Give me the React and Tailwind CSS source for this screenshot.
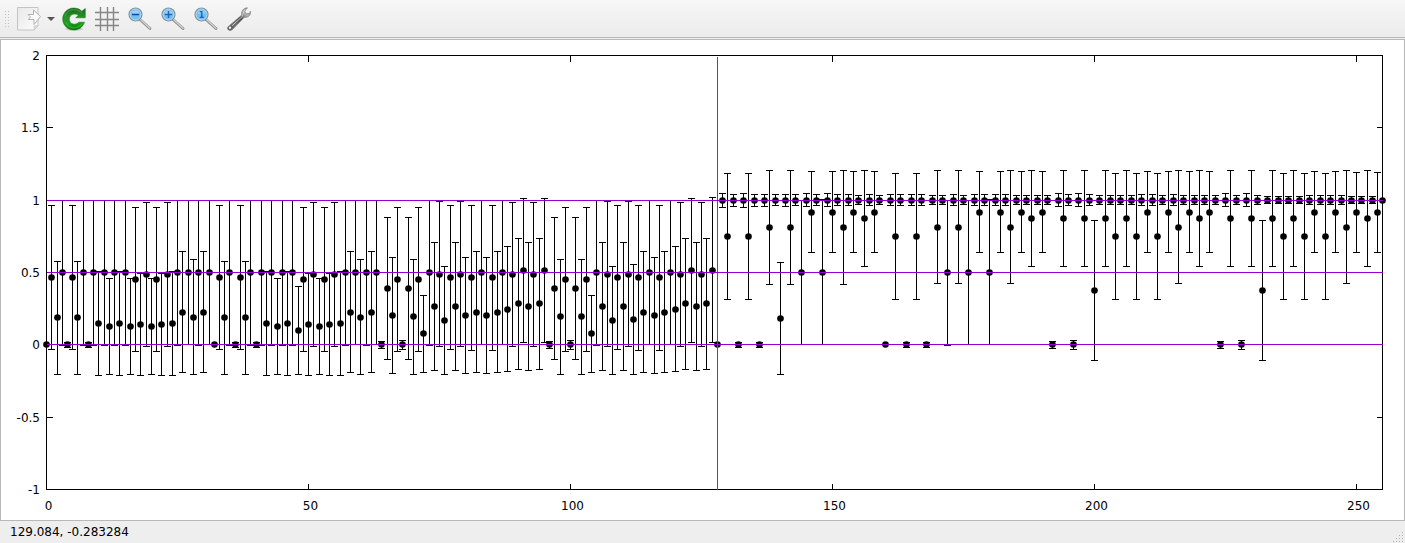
import React from 'react';

// value, upper end, lower end (the bar is left out when only a value is given)
const levels = {
  z: [0],
  h: [0.5, 1, -0.004],
  H: [0.5, 1, 0],
  N: [0.5, 1.005, 0],
  a: [0.466, 0.964, -0.032],
  b: [0.189, 0.576, -0.205],
  c: [0.148, 0.507, -0.212],
  d: [0.127, 0.459, -0.205],
  e: [0.452, 0.95, -0.046],
  f: [0.141, 0.494, -0.212],
  g: [0.487, 0.984, -0.011],
  i: [0.224, 0.646, -0.191],
  j: [0.189, 0.59, -0.205],
  k: [0.1, 0.404, -0.205],
  l: [0.39, 0.881, -0.101],
  m: [0.203, 0.604, -0.198],
  n: [0.196, 0.59, -0.205],
  o: [0.079, 0.341, -0.191],
  p: [0.265, 0.708, -0.177],
  q: [0.487, 0.991, -0.011],
  r: [0.169, 0.542, -0.205],
  s: [0, 0.017, -0.018],
  t: [0, 0.022, -0.025],
  u: [0, 0.03, -0.032],
  x: [0.466, 0.964, -0.039],
  y: [0.245, 0.68, -0.184],
  A: [0.286, 0.735, -0.17],
  B: [0.514, 1.012, 0.017],
  C: [0.176, 0.556, -0.205],
  D: [0.514, 1.019, 0.017],
  E: [0.749, 1.185, 0.314],
  F: [0.811, 1.206, 0.418],
  G: [0.811, 1.206, 0.424],
  I: [0.182, 0.57, -0.205],
  J: [0.915, 1.199, 0.639],
  K: [0.874, 1.206, 0.542],
  L: [0.376, 0.86, -0.108],
  M: [0.915, 1.192, 0.639],
  1: [1, 1.047, 0.95],
  2: [1, 1.04, 0.957],
  3: [1, 1.047, 0.957],
  4: [1, 1.04, 0.964],
  5: [1, 1.033, 0.97],
  6: [1, 1.026, 0.977],
  7: [1],
};

// one letter per x, 16 to a row
const series = [
  'zabhsabhshchdhch',
  'defgdefgchiHjhiH',
  'zabhsabhshchdhch',
  'kefgdefgchiHjhiH',
  'tlmeulneohpqrapq',
  'mxiHmxiHygABpgAB',
  'tlneulneohpqrapq',
  'CxiHmxiHygABpgAD',
  'z1E2s1E2s2F4I2F4',
  'H3J4N3J4F4J5K4J5',
  'z4E4s4E4s5G5h4G5',
  'H4J4N4J4G5J5K5J5',
  't3K4u3K4L5K5E5K5',
  'E4J4E5J4G5J5K5J5',
  't3K5u3K5L6K6E6K6',
  'E5J5E5J5G6M6K6M7',
].join('');

const xPos = (x) => Math.round(46.05 + x * 5.2407) + 0.5;
const yPos = (y) => Math.round(344.4 - y * 144.67) + 0.5;

const xTicks = [0, 50, 100, 150, 200, 250];
const yTicks = [2, 1.5, 1, 0.5, 0, -0.5, -1];

function Plot() {
  const left = xPos(0);
  const right = xPos(255);
  const top = yPos(2);
  const bottom = yPos(-1);

  return (
    <svg viewBox="1 40 1403 480" className="block w-full h-auto" role="img" aria-label="Plot">
      <g fontFamily='"DejaVu Sans", sans-serif' fontSize="12" fill="#000">
        {yTicks.map((t) => (
          <text key={t} x="40" y={yPos(t) + 4.5} textAnchor="end">{t}</text>
        ))}
        {xTicks.map((t) => (
          <text key={t} x={xPos(t) + 2} y="510" textAnchor="middle">{t}</text>
        ))}
      </g>

      <g stroke="#000" fill="none" shapeRendering="crispEdges">
        {yTicks.map((t) => (
          <path key={t} d={`M${left} ${yPos(t)}h6M${right} ${yPos(t)}h-6`} />
        ))}
        {xTicks.map((t) => (
          <path key={t} d={`M${xPos(t)} ${top}v6M${xPos(t)} ${bottom}v-6`} />
        ))}
        <rect x={left} y={top} width={right - left} height={bottom - top} />
      </g>

      {[...series].map((key, i) => {
        const [value, high, low] = levels[key];
        const x = xPos(i);
        return (
          <g key={i}>
            {high !== undefined && (
              <path
                d={`M${x} ${yPos(high)}V${yPos(low)}M${x - 3.5} ${yPos(high)}h7M${x - 3.5} ${yPos(low)}h7`}
                stroke="#000"
                fill="none"
                shapeRendering="crispEdges"
              />
            )}
            <circle cx={x} cy={yPos(value)} r="3.3" />
          </g>
        );
      })}

      <g fill="none" shapeRendering="crispEdges">
        <path d={`M${xPos(128)} ${top + 1}V${bottom}`} stroke="#e51e10" />
        {[0, 0.5, 1].map((y) => (
          <path key={y} d={`M${left} ${yPos(y)}H${right}`} stroke="#9400d3" />
        ))}
      </g>
    </svg>
  );
}

function ExportIcon() {
  return (
    <svg width="24" height="24" viewBox="0 0 24 24">
      <defs>
        <linearGradient id="page" x1="0" y1="0" x2="1" y2="1">
          <stop offset="0" stopColor="#e8e8e8" />
          <stop offset="1" stopColor="#fdfdfd" />
        </linearGradient>
      </defs>
      <path d="M.5.5h20.500v18l-4 4.500H.5z" fill="url(#page)" stroke="#c4c4c4" />
      <path d="M21 18.500l-4 .5v4z" fill="#ddd" stroke="#c4c4c4" strokeWidth=".6" />
      <path d="M11 7.500h5.500V3L23.500 9.500 17 17.500v-5h-5.500l2-2.500z" fill="#fafafa" stroke="#b2b2b2" strokeLinejoin="round" />
    </svg>
  );
}

function ReloadIcon() {
  return (
    <svg width="24" height="24" viewBox="0 0 24 24">
      <defs>
        <linearGradient id="leaf" x1="0" y1="0" x2="0" y2="1">
          <stop offset="0" stopColor="#176b17" />
          <stop offset=".45" stopColor="#2a962a" />
          <stop offset=".7" stopColor="#18a018" />
          <stop offset="1" stopColor="#0b730b" />
        </linearGradient>
      </defs>
      <ellipse cx="12" cy="22" rx="9" ry="1.700" fill="#000" opacity=".13" />
      <path
        d="M19.800 4.200L23.300 1.500V10.800H13.800L16.400 8.200C13 5.800 7.300 7.500 7.300 12.200c0 5 6 6.600 9.600 3h5.600C20.500 20.500 16.500 23 12 23 5.500 23 .7 18 .7 12S5.500 1 11.500 1c3.500 0 6.300 1.200 8.300 3.200z"
        fill="url(#leaf)"
        stroke="#116911"
        strokeWidth=".5"
      />
      <path d="M3 9C4.500 4.800 8 2.600 11.500 2.600c3.500 0 6 1.200 8.500 3.600" fill="none" stroke="#75c775" strokeWidth=".8" opacity=".6" />
      <path d="M4 15.500c1.500 3.800 4.700 5.300 8 5.300 3.300 0 6-1.300 7.700-3.600" fill="none" stroke="#37cf37" strokeWidth="1.300" opacity=".6" />
    </svg>
  );
}

function GridIcon() {
  return (
    <svg width="24" height="24" viewBox="0 0 24 24">
      <path d="M5.500 0v24M12.500 0v24M18.500 0v24M0 5.500h24M0 12.500h24M0 18.500h24" stroke="#858585" strokeWidth="1.400" fill="none" />
    </svg>
  );
}

function ZoomIcon({ children }) {
  return (
    <svg width="24" height="24" viewBox="0 0 24 24">
      <path d="M12 12.500L22 21.500" stroke="#8d8d8d" strokeWidth="2.800" strokeLinecap="round" />
      <path d="M12.500 12.500L22 21.200" stroke="#d2d2d2" strokeWidth="1.300" strokeLinecap="round" />
      <circle cx="7.500" cy="7.500" r="6.500" fill="#72bff4" stroke="#8b9097" strokeWidth="1.200" />
      <circle cx="7.500" cy="7.500" r="5.400" fill="none" stroke="#b8ddf6" strokeWidth=".8" />
      <path d="M3.400 6.200a4.400 4.400 0 0 1 8.200 0q-4 1.500-8.200 0z" fill="#a9dafa" opacity=".8" />
      {children}
    </svg>
  );
}

function WrenchIcon() {
  return (
    <svg width="24" height="24" viewBox="0 0 24 24">
      <defs>
        <linearGradient id="steel" x1="0" y1="1" x2="1" y2="0">
          <stop offset="0" stopColor="#555" />
          <stop offset=".3" stopColor="#6e6e6e" />
          <stop offset=".55" stopColor="#454545" />
          <stop offset=".75" stopColor="#b5b5b5" />
          <stop offset="1" stopColor="#8b8b8b" />
        </linearGradient>
      </defs>
      <path
        d="M1 19.800L14.800 8C13.800 4.200 16.500.8 20.500.8L17.800 4.200l1.500 2.600 3.500-.6.700-2C24.200 8 21.200 10.800 17.300 10.300L5.200 22.700C2.800 24.500-.8 22.500 1 19.800z"
        fill="url(#steel)"
        stroke="#777"
        strokeWidth=".6"
      />
      <path d="M5 18.800L15.500 9.300c.5-3 .9-5 2.700-6.800" fill="none" stroke="#ddd" strokeWidth=".8" />
      <circle cx="3" cy="20.800" r="1.200" fill="#eee" />
    </svg>
  );
}

function ToolButton({ label, children }) {
  return (
    <button type="button" aria-label={label} title={label} className="block size-6 shrink-0">
      {children}
    </button>
  );
}

export default function App() {
  return (
    <div className="min-h-screen bg-[#eeeeee] text-black">
      <header className="flex items-center h-[38px] pl-[5px] border-b border-[#b8b8b8] bg-linear-to-b from-[#f7f7f7] to-[#ebebeb]">
        <svg width="5" height="18" viewBox="0 0 5 18" shapeRendering="crispEdges" aria-hidden="true">
          <path d="M.5 1v17M3.500 1v17" stroke="#c3c3c3" strokeDasharray="1 2" />
        </svg>
        <div className="flex items-center gap-[9px] ml-[7px]">
          <div className="flex items-center gap-[6px]">
            <ToolButton label="Export plot"><ExportIcon /></ToolButton>
            <button type="button" aria-label="Export options" className="block w-[6px]">
              <svg width="8" height="4" viewBox="0 0 8 4">
                <path d="M0 0h8L4 4z" fill="#555" />
              </svg>
            </button>
          </div>
          <ToolButton label="Replot"><ReloadIcon /></ToolButton>
          <ToolButton label="Toggle grid"><GridIcon /></ToolButton>
          <ToolButton label="Previous zoom">
            <ZoomIcon>
              <path d="M4 7.500h7" stroke="#16459a" strokeWidth="1.500" />
            </ZoomIcon>
          </ToolButton>
          <ToolButton label="Next zoom">
            <ZoomIcon>
              <path d="M4 7.500h7M7.500 4v7" stroke="#2465ae" strokeWidth="1.500" />
            </ZoomIcon>
          </ToolButton>
          <ToolButton label="Autoscale">
            <ZoomIcon>
              <text x="7.500" y="10.500" textAnchor="middle" fontSize="8" fontWeight="bold" fontFamily='"DejaVu Sans", sans-serif' fill="#2465ae">1</text>
            </ZoomIcon>
          </ToolButton>
          <ToolButton label="Configure"><WrenchIcon /></ToolButton>
        </div>
      </header>

      <main className="mt-px bg-white border border-[#b8b8b8]">
        <Plot />
      </main>

      <footer className="flex items-end justify-between h-[22px] pl-[10px] pr-px">
        <p className="font-['DejaVu_Sans',sans-serif] text-[12px] leading-[22px]">129.084, -0.283284</p>
        <svg width="12" height="12" viewBox="0 0 12 12" fill="#b0b0b0" shapeRendering="crispEdges" aria-hidden="true">
          <path d="M10 1h1v1h-1zM7 4h1v1H7zM10 4h1v1h-1zM4 7h1v1H4zM7 7h1v1H7zM10 7h1v1h-1zM1 10h1v1H1zM4 10h1v1H4zM7 10h1v1H7zM10 10h1v1h-1z" />
        </svg>
      </footer>
    </div>
  );
}
